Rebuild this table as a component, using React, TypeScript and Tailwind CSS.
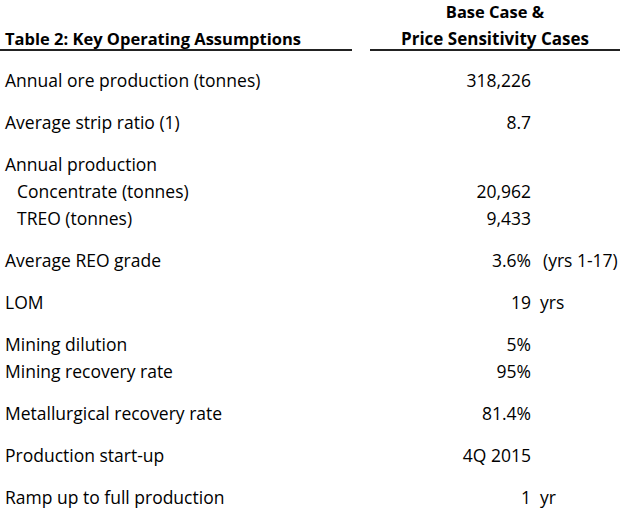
import type { ReactNode } from 'react'

interface Row {
  label: string
  value: string
  extra?: string
  wide?: boolean
  indent?: boolean
  gap?: boolean
}

const rows: Row[] = [
  { label: 'Annual ore production (tonnes)', value: '318,226', gap: true },
  { label: 'Average strip ratio (1)', value: '8.7', gap: true },
  { label: 'Annual production', value: '', gap: true },
  { label: 'Concentrate (tonnes)', value: '20,962', indent: true },
  { label: 'TREO (tonnes)', value: '9,433', indent: true },
  { label: 'Average REO grade', value: '3.6%', extra: '(yrs 1-17)', wide: true, gap: true },
  { label: 'LOM', value: '19', extra: 'yrs', gap: true },
  { label: 'Mining dilution', value: '5%', gap: true },
  { label: 'Mining recovery rate', value: '95%' },
  { label: 'Metallurgical recovery rate', value: '81.4%', gap: true },
  { label: 'Production start-up', value: '4Q 2015', gap: true },
  { label: 'Ramp up to full production', value: '1', extra: 'yr', gap: true },
]

function Cell({ children, className }: { children?: ReactNode; className?: string }) {
  return <span className={className}>{children}</span>
}

export default function App() {
  return (
    <div
      className="w-[625px] h-[510px] bg-white text-black overflow-hidden"
      style={{ fontFamily: '"Open Sans", Lato, sans-serif' }}
    >
      <div className="flex items-end">
        <div className="w-[352px] border-b-2 border-[#222] pl-[5px]">
          <h1 className="text-[16.5px] font-bold leading-[20px]">Table 2: Key Operating Assumptions</h1>
        </div>
        <div className="ml-[18px] w-[250px] border-b-2 border-[#222] text-center">
          <p className="text-[16.5px] font-bold leading-[24px]">Base Case &amp;</p>
          <p className="mt-[5px] text-[17px] font-bold leading-[20px]">Price Sensitivity Cases</p>
        </div>
      </div>

      <div className="flex flex-col text-[17.5px]">
        {rows.map((r, i) => (
          <div
            key={i}
            className={`flex h-[27px] items-center ${i === 0 ? 'mt-[16px]' : r.gap ? 'mt-[15px]' : ''}`}
          >
            <Cell className={`w-[426px] ${r.indent ? 'pl-[17px]' : 'pl-[5px]'}`}>{r.label}</Cell>
            <Cell className="w-[105px] text-right">{r.value}</Cell>
            {r.extra && <Cell className={r.wide ? 'pl-[12px]' : 'pl-[9px]'}>{r.extra}</Cell>}
          </div>
        ))}
      </div>
    </div>
  )
}
